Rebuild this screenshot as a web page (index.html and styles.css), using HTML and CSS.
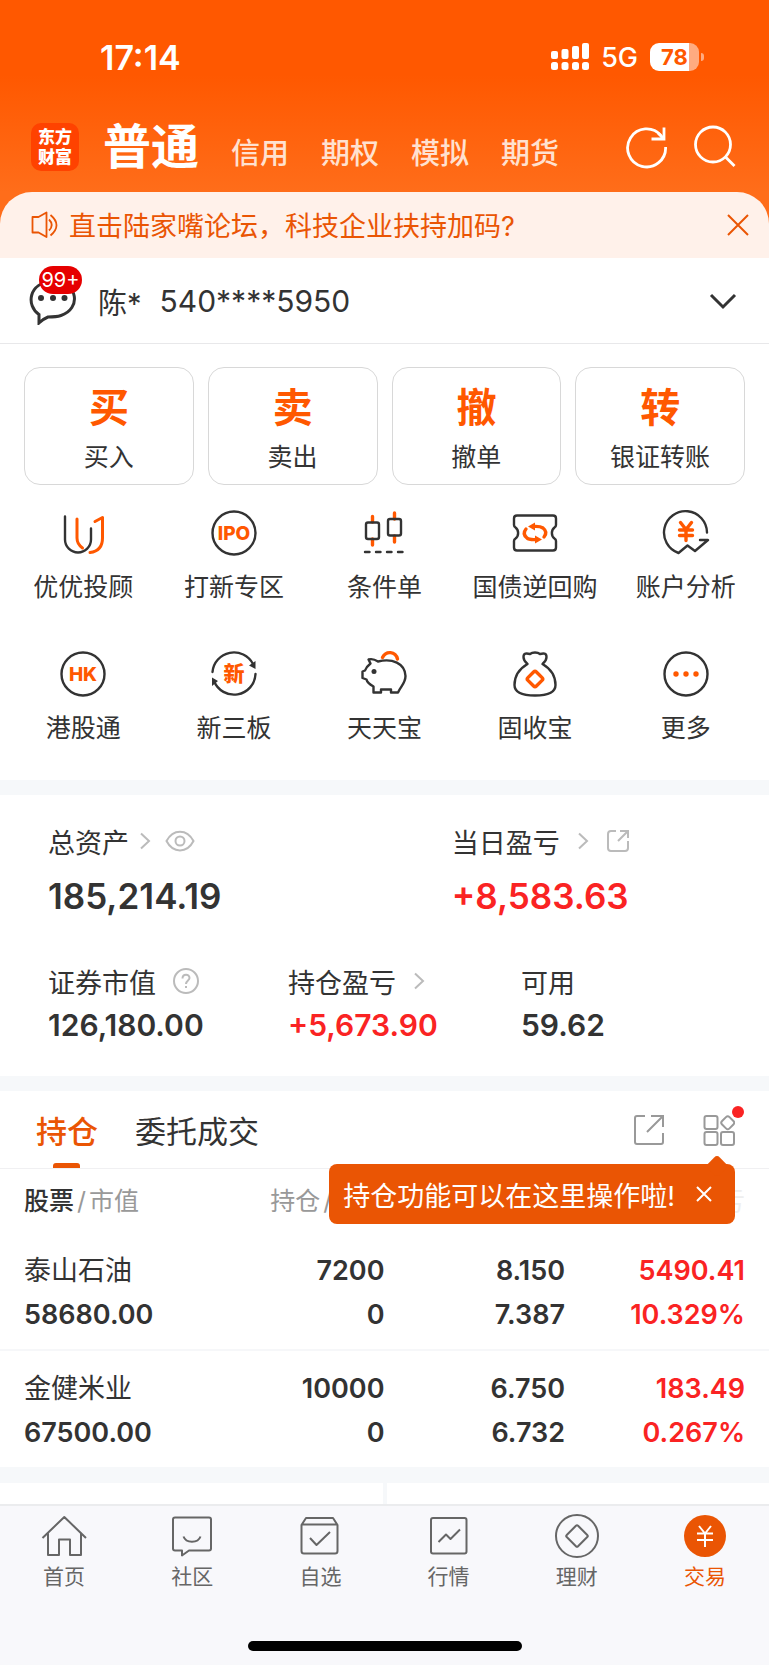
FILE: index.html
```html
<!DOCTYPE html>
<html lang="zh-CN">
<head>
<meta charset="utf-8">
<meta name="viewport" content="width=device-width, initial-scale=1">
<title>交易</title>
<link rel="stylesheet" href="styles.css">
</head>
<body>
<div class="top">
  <div class="status">
    <time class="clock">17:14</time>
    <div class="status-right">
      <svg width="38" height="28" viewBox="0 0 38 28" fill="#fff" aria-hidden="true">
        <rect x="0" y="8" width="7" height="8" rx="2"/><rect x="10.500" y="6" width="7" height="10" rx="2"/><rect x="21" y="3" width="7" height="13" rx="2"/><rect x="31" y="0" width="7" height="16" rx="2"/>
        <rect x="0" y="19" width="7" height="8" rx="2.500"/><rect x="10.500" y="19" width="7" height="8" rx="2.500"/><rect x="21" y="19" width="7" height="8" rx="2.500"/><rect x="31" y="19" width="7" height="8" rx="2.500"/>
      </svg>
      <span class="network">5G</span>
      <span class="battery">78</span>
    </div>
  </div>
  <header class="header">
    <div class="logo"><span>东方</span><span>财富</span></div>
    <nav class="modes">
      <a class="mode mode-on" href="#">普通</a>
      <a class="mode" href="#">信用</a>
      <a class="mode" href="#">期权</a>
      <a class="mode" href="#">模拟</a>
      <a class="mode" href="#">期货</a>
    </nav>
    <div class="header-tools">
      <button aria-label="刷新"><svg width="44" height="44" viewBox="0 0 44 44" fill="none" stroke="#fff" stroke-width="2.800"><path d="M40.600 22A19 19 0 1 1 36 10.500"/><path d="M39 2.500V14H26.500M38 13L33 8"/></svg></button>
      <button aria-label="搜索"><svg width="44" height="44" viewBox="0 0 44 44" fill="none" stroke="#fff" stroke-width="2.800"><circle cx="20" cy="19.500" r="17.500"/><path d="M32 31.500L41.500 41"/></svg></button>
    </div>
  </header>
  <div class="notice">
    <svg width="28" height="28" viewBox="0 0 28 28" fill="none" stroke="#ea5504" stroke-width="1.800" stroke-linejoin="round" aria-hidden="true"><path d="M2.500 6H8.500L16.500 1.500V26L8.500 21.500H2.500Z"/><path d="M19 8.500Q24.500 14 19 19.500"/><path d="M20.500 4Q32.500 14 20.500 24.500"/></svg>
    <a class="notice-text" href="#">直击陆家嘴论坛，科技企业扶持加码?</a>
    <button aria-label="关闭公告"><svg width="24" height="24" viewBox="0 0 24 24" stroke="#ea5504" stroke-width="2"><path d="M2 2L22 22M22 2L2 22"/></svg></button>
  </div>
</div>

<main>
  <section class="account">
    <button class="messages" aria-label="消息">
      <svg width="48" height="48" viewBox="0 0 48 48" fill="none" aria-hidden="true"><path d="M10 46V37.500C-3 29 -1 5 24 4.500C50 5 52 32 32 38.500C28 39.800 23 40 19 40Q15 41.500 10 46Z" stroke="#333" stroke-width="3"/><g fill="#333"><circle cx="12" cy="21" r="3"/><circle cx="24" cy="21" r="3"/><circle cx="35.500" cy="21" r="3"/></g></svg>
      <span class="badge">99+</span>
    </button>
    <span class="holder">陈*</span>
    <span class="number">540****5950</span>
    <button aria-label="切换账户"><svg width="28" height="18" viewBox="0 0 28 18" fill="none" stroke="#333" stroke-width="3"><path d="M2 3L14 15L26 3"/></svg></button>
  </section>

  <section class="actions">
    <button class="action"><strong>买</strong><span>买入</span></button>
    <button class="action"><strong>卖</strong><span>卖出</span></button>
    <button class="action"><strong>撤</strong><span>撤单</span></button>
    <button class="action"><strong>转</strong><span>银证转账</span></button>
  </section>

  <section class="services">
    <a class="service" href="#"><svg class="ico" viewBox="0 0 48 48"><path d="M6 7.500V30.500A13 13 0 0 0 32 30.500V19.500"/><path class="hot" d="M18 10V29Q18 35 23.500 39M36 12.500L43.500 8.500V29Q43.500 42 31 43.500"/></svg><span>优优投顾</span></a>
    <a class="service" href="#"><svg class="ico" viewBox="0 0 48 48"><circle cx="24" cy="24" r="21.500"/><text class="ico-text" x="24" y="31">IPO</text></svg><span>打新专区</span></a>
    <a class="service" href="#"><svg class="ico" viewBox="0 0 48 48"><path class="wick" d="M12.500 7.500V13M12.500 30V36M34.500 4V10M34.500 27V33"/><rect x="6" y="13.500" width="13" height="16.500" rx="2"/><rect x="28" y="10" width="13" height="16.500" rx="2"/><path d="M5 43H9.500M16 43H20.500M27 43H31.500M38 43H42.500"/></svg><span>条件单</span></a>
    <a class="service" href="#"><svg class="ico" viewBox="0 0 48 48"><path d="M6 6.500H42Q45 6.500 45 9.500V16Q45 17.500 43.500 18.500C40 21 40 27 43.500 29.500Q45 30.500 45 32V38.500Q45 41.500 42 41.500H6Q3 41.500 3 38.500V32Q3 30.500 4.500 29.500C8 27 8 21 4.500 18.500Q3 17.500 3 16V9.500Q3 6.500 6 6.500Z"/><path class="wick" d="M15 20Q11 25 16 29Q18 31 26 30.500M33 28Q37 23 32 19Q29 17 22 17.500"/><path class="hot-fill" d="M24 13.500V21.500L17 17.500ZM24 26.500V34.500L31 30.500Z"/></svg><span>国债逆回购</span></a>
    <a class="service" href="#"><svg class="ico" viewBox="0 0 48 48"><path d="M45 23.500A21.500 21.500 0 1 0 16.500 44L25.500 36.500L33 42L46 31H38"/><path class="wick" d="M18.500 13.500L24 20.500L29.500 13.500M17.500 21H30.500M17.500 26.500H30.500M24 21V31.500"/></svg><span>账户分析</span></a>
    <a class="service" href="#"><svg class="ico" viewBox="0 0 48 48"><circle cx="24" cy="24" r="21.500"/><text class="ico-text" x="24" y="31">HK</text></svg><span>港股通</span></a>
    <a class="service" href="#"><svg class="ico" viewBox="0 0 48 48"><path d="M2.500 22A21.500 21.500 0 0 1 43 14M45.500 24A21.500 21.500 0 0 1 4 31"/><path class="dark-fill" d="M45.500 11V19L39 15.500ZM2 36V27.500L8 31Z"/><text class="ico-text ico-cjk" x="24" y="31">新</text></svg><span>新三板</span></a>
    <a class="service" href="#"><svg class="ico" viewBox="0 0 48 48"><path d="M8.500 9.500C12 8.500 15 9.500 18 11.500C32 8 45 13 45.500 26C45.500 33 41 36 38 42.500H31V39.500H21V42.500H13.500V36.500C9 34 7 32 6.500 29.500L2.500 28V21.500L5 20.500C6 17 8 15.500 10.500 13.500Z"/><circle class="dark-fill" cx="14" cy="21.500" r="2.500"/><path class="wick" d="M22.500 7.500C26 .5 35.500 1 37.500 9"/></svg><span>天天宝</span></a>
    <a class="service" href="#"><svg class="ico" viewBox="0 0 48 48"><path d="M16.500 14C8 19 3.500 26 3.500 35C3.500 43 12 45.500 24 45.500S44.500 43 44.500 35C44.500 26 40 19 31.500 14C34 12 35.500 10 35.500 7C35.500 3 32.500 3 29 4C26.500 2 21.500 2 19 4C15.500 3 12.500 3 12.500 7C12.500 10 14 12 16.500 14Z"/><rect class="wick" x="18" y="23" width="12" height="12" rx="2" transform="rotate(45 24 29)"/></svg><span>固收宝</span></a>
    <a class="service" href="#"><svg class="ico" viewBox="0 0 48 48"><circle cx="24" cy="24" r="21.500"/><g class="hot-fill"><circle cx="14" cy="24" r="2.700"/><circle cx="24" cy="24" r="2.700"/><circle cx="34" cy="24" r="2.700"/></g></svg><span>更多</span></a>
  </section>

  <section class="assets">
    <div class="asset-row asset-main">
      <div>
        <div class="label">总资产<svg width="12" height="18" viewBox="0 0 12 18" class="line-ico"><path d="M2 1.500L10 9L2 16.500"/></svg><svg width="30" height="22" viewBox="0 0 30 22" class="line-ico eye"><path d="M1.500 11C8 -1.500 22 -1.500 28.500 11C22 23.500 8 23.500 1.500 11Z"/><circle cx="15" cy="11" r="4.500"/></svg></div>
        <div class="value">185,214.19</div>
      </div>
      <div>
        <div class="label">当日盈亏<svg width="12" height="18" viewBox="0 0 12 18" class="line-ico wide"><path d="M2 1.500L10 9L2 16.500"/></svg><svg width="24" height="24" viewBox="0 0 24 24" class="line-ico wide"><path d="M10 2H5Q2 2 2 5V19Q2 22 5 22H19Q22 22 22 19V12M14 2H22V9M21 3L12 12"/></svg></div>
        <div class="value up">+8,583.63</div>
      </div>
    </div>
    <div class="asset-row asset-sub">
      <div>
        <div class="label">证券市值<svg width="26" height="26" viewBox="0 0 26 26" class="line-ico wide"><circle cx="13" cy="13" r="12"/><path d="M9.500 10.500C9.500 5.500 16.500 5.500 16.500 10C16.500 12.500 13 12.500 13 16M13 18V20"/></svg></div>
        <div class="value">126,180.00</div>
      </div>
      <div>
        <div class="label">持仓盈亏<svg width="12" height="18" viewBox="0 0 12 18" class="line-ico wide"><path d="M2 1.500L10 9L2 16.500"/></svg></div>
        <div class="value up">+5,673.90</div>
      </div>
      <div>
        <div class="label">可用</div>
        <div class="value">59.62</div>
      </div>
    </div>
  </section>

  <section class="positions">
    <div class="tabs">
      <button class="tab tab-on">持仓</button>
      <button class="tab">委托成交</button>
      <div class="tab-tools">
        <button aria-label="分享"><svg width="32" height="32" viewBox="0 0 32 32" fill="none" stroke="#999" stroke-width="2"><path d="M12 2H4Q2 2 2 4V28Q2 30 4 30H28Q30 30 30 28V19M18 2H30V13M29 3L14 18"/></svg></button>
        <button class="grid-tool" aria-label="持仓功能"><svg width="32" height="32" viewBox="0 0 32 32" fill="none" stroke="#999" stroke-width="2"><rect x="1.500" y="2" width="13" height="13" rx="2"/><rect x="1.500" y="18" width="13" height="13" rx="2"/><rect x="18" y="18" width="13" height="13" rx="2"/><rect x="19.500" y="3.500" width="10.500" height="10.500" rx="2.500" transform="rotate(45 24.750 8.750)"/></svg><i class="dot"></i>
        </button>
        <div class="tip" role="tooltip">
          <span>持仓功能可以在这里操作啦!</span>
          <button aria-label="关闭提示"><svg width="18" height="18" viewBox="0 0 18 18" stroke="#fff" stroke-width="2"><path d="M2 2L16 16M16 2L2 16"/></svg></button>
        </div>
      </div>
    </div>
    <table class="holdings">
      <thead>
        <tr><th><b>股票</b><i>/</i>市值</th><th>持仓<i>/</i></th><th></th><th>亏</th></tr>
      </thead>
      <tbody>
        <tr><td><span class="stock">泰山石油</span><span>58680.00</span></td><td><span>7200</span><span>0</span></td><td><span>8.150</span><span>7.387</span></td><td class="up"><span>5490.41</span><span>10.329%</span></td></tr>
        <tr><td><span class="stock">金健米业</span><span>67500.00</span></td><td><span>10000</span><span>0</span></td><td><span>6.750</span><span>6.732</span></td><td class="up"><span>183.49</span><span>0.267%</span></td></tr>
      </tbody>
    </table>
  </section>
  <div class="links"><div></div><div></div></div>
</main>

<footer class="bottom">
  <nav class="tabbar">
    <a href="#"><svg class="nav-ico" viewBox="0 0 48 48"><path d="M2.500 26L24.300 5L46 26M8 21.500V43H19V27.500H30V43H41V21.500"/></svg>首页</a>
    <a href="#"><svg class="nav-ico" viewBox="0 0 48 48"><path d="M7 5.500H41Q43 5.500 43 7.500V36.500Q43 38.500 41 38.500H21L14 43.500V38.500H7Q5 38.500 5 36.500V7.500Q5 5.500 7 5.500ZM15.500 24.500C18 31.500 30 31.500 32.500 24.500"/></svg>社区</a>
    <a href="#"><svg class="nav-ico" viewBox="0 0 48 48"><path d="M5.500 13V39Q5.500 41.500 8 41.500H39Q41.500 41.500 41.500 39V13L37 6H10ZM5.500 12.500H41.500M14 26L20.500 33L34 20"/></svg>自选</a>
    <a href="#"><svg class="nav-ico" viewBox="0 0 48 48"><rect x="6" y="6" width="35.500" height="35.500" rx="2"/><path d="M13.500 30L21 22.500L25.500 27L35 17.500"/></svg>行情</a>
    <a href="#"><svg class="nav-ico" viewBox="0 0 48 48"><circle cx="24" cy="24" r="21"/><rect x="16" y="16" width="16" height="16" rx="1.500" transform="rotate(45 24 24)"/></svg>理财</a>
    <a class="nav-on" href="#"><svg class="nav-ico" viewBox="0 0 48 48"><circle cx="24" cy="24" r="21"/><path d="M18 14L24 21.500L30 14M16 21.500H32M16 28H32M24 21.500V35"/></svg>交易</a>
  </nav>
  <div class="home-bar"></div>
</footer>
</body>
</html>
```
FILE: styles.css
```css
* { box-sizing: border-box; }
body {
  margin: 0;
  min-height: 100vh;
  display: flex;
  flex-direction: column;
  background: #f8f8fb;
  color: #333;
  font-family: Inter, "Noto Sans CJK SC", sans-serif;
  font-size: 27px;
}
button {
  padding: 0;
  border: 0;
  background: none;
  color: inherit;
  font: inherit;
  display: block;
}
a { color: inherit; text-decoration: none; }
svg { display: block; flex: none; }
i, b { font-style: normal; }

/* Status bar, header and notice */
.top { background: linear-gradient(#ff5800 75px, #ff6d1a 192px); }
.status {
  height: 102px;
  padding: 12px 64px 0 100px;
  display: flex;
  align-items: center;
  justify-content: space-between;
  color: #fff;
}
.clock { font-size: 34px; font-weight: 600; }
.status-right { display: flex; align-items: center; gap: 12px; }
.network { font-weight: 500; }
.battery {
  position: relative;
  width: 49px;
  height: 28px;
  margin-right: 6px;
  border-radius: 9px;
  background: linear-gradient(90deg, #fff 79%, #ffab80 79%);
  color: #ff5800;
  font-size: 22px;
  font-weight: 700;
  line-height: 28px;
  text-align: center;
}
.battery::after {
  content: "";
  position: absolute;
  left: 51px;
  top: 10px;
  width: 3px;
  height: 8px;
  border-radius: 0 4px 4px 0;
  background: #ffab80;
}
.header {
  height: 90px;
  padding: 0 32px 0 31px;
  display: flex;
  align-items: center;
}
.logo {
  width: 48px;
  height: 48px;
  border-radius: 10px;
  background: #ff4200;
  color: #fff;
  font-size: 17px;
  font-weight: 900;
  line-height: 20px;
  display: flex;
  flex-direction: column;
  align-items: center;
  justify-content: center;
}
.modes {
  flex: 1;
  margin-left: 24px;
  padding-top: 6px;
  display: flex;
  align-items: baseline;
  gap: 32px;
}
.mode { color: #ffe1d0; font-size: 29px; font-weight: 500; line-height: 64px; }
.mode-on { color: #fff; font-size: 48px; font-weight: 700; }
.header-tools { display: flex; gap: 24px; }
.notice {
  height: 66px;
  padding: 0 19px 0 30px;
  display: flex;
  align-items: center;
  border-radius: 32px 32px 0 0;
  background: #fff1ea;
  color: #ea5504;
}
.notice-text { flex: 1; margin-left: 11px; padding-bottom: 2px; }

/* Account */
main { background: #fff; }
.account {
  height: 86px;
  padding: 0 32px 0 29px;
  border-bottom: 1px solid #e8e8ea;
  display: flex;
  align-items: center;
}
.messages { position: relative; }
.badge {
  position: absolute;
  left: 10px;
  top: -11px;
  width: 43px;
  height: 28px;
  border-radius: 14px;
  background: #e60000;
  color: #fff;
  font-size: 20px;
  line-height: 28px;
  text-align: center;
}
.holder { margin-left: 21px; font-size: 29px; }
.number { flex: 1; margin-left: 18px; font-size: 30px; }

/* Main actions */
.actions {
  padding: 23px 24px 0;
  display: grid;
  grid-template-columns: repeat(4, 1fr);
  gap: 14px;
}
.action {
  height: 118px;
  border: 1px solid #d8d8d8;
  border-radius: 16px;
  display: flex;
  flex-direction: column;
  align-items: center;
  font-size: 25px;
  line-height: 36px;
}
.action strong {
  margin: 16px 0 7px;
  color: #ff5800;
  font-size: 40px;
  font-weight: 700;
  line-height: 48px;
}
.services {
  padding: 24px 8px 32px;
  display: grid;
  grid-template-columns: repeat(5, 1fr);
}
.service {
  height: 141px;
  display: flex;
  flex-direction: column;
  align-items: center;
  gap: 12px;
  font-size: 25px;
  line-height: 36px;
  white-space: nowrap;
}
.service:nth-child(n + 6) { height: 98px; }
.ico {
  width: 48px;
  height: 48px;
  fill: none;
  stroke: #333;
  stroke-width: 2.4;
  stroke-linecap: round;
  stroke-linejoin: round;
}
.hot { stroke: #ff5800; stroke-width: 3; }
.wick { stroke: #ff5800; stroke-width: 3.4; }
.hot-fill { fill: #ff5800; stroke: none; }
.dark-fill { fill: #333; stroke: none; }
.ico-text {
  fill: #ff5800;
  stroke: none;
  font-size: 19px;
  font-weight: 800;
  text-anchor: middle;
}
.ico-cjk { font-size: 21px; }

/* Assets */
.assets {
  padding: 26px 48px 15px;
  border-top: 15px solid #f6f8fa;
  border-bottom: 15px solid #f6f8fa;
}
.asset-row { display: grid; }
.asset-main { grid-template-columns: 3fr 2fr; height: 140px; }
.asset-sub { grid-template-columns: 240fr 233fr 200fr; height: 100px; }
.label { display: flex; align-items: center; height: 40px; }
.line-ico { fill: none; stroke: #bbb; stroke-width: 2; margin-left: 10px; }
.eye { margin-left: 14px; }
.wide { margin-left: 17px; }
.value { font-size: 30px; font-weight: 600; line-height: 48px; }
.asset-main .value { font-size: 35px; line-height: 70px; }
.up, .holdings .up { color: #fa2323; }

/* Positions */
.tabs {
  height: 78px;
  padding: 0 34px 0 36px;
  border-bottom: 1px solid #f0f0f2;
  display: flex;
  gap: 37px;
}
.tab { position: relative; font-size: 31px; }
.tab-on { color: #ea5504; font-weight: 500; }
.tab-on::after {
  content: "";
  position: absolute;
  left: 17px;
  bottom: 0;
  width: 27px;
  height: 5px;
  border-radius: 3px 3px 0 0;
  background: #ea5504;
}
.tab-tools {
  position: relative;
  margin-left: auto;
  display: flex;
  align-items: center;
  gap: 38px;
}
.grid-tool { position: relative; }
.dot {
  position: absolute;
  right: -9px;
  top: -8px;
  width: 12px;
  height: 12px;
  border-radius: 6px;
  background: #fa2323;
}
.tip {
  position: absolute;
  right: 0;
  top: 73px;
  height: 60px;
  padding: 0 22px 0 14px;
  border-radius: 8px;
  background: #ea5504;
  color: #fff;
  white-space: nowrap;
  display: flex;
  align-items: center;
  gap: 20px;
}
.tip::before {
  content: "";
  position: absolute;
  right: 10px;
  top: -6px;
  width: 16px;
  height: 16px;
  border-radius: 4px;
  background: #ea5504;
  transform: rotate(45deg);
}
.holdings {
  width: 100%;
  border-collapse: collapse;
  table-layout: fixed;
  text-align: right;
  font-weight: 600;
}
.holdings th {
  height: 64px;
  padding: 0 0 4px;
  color: #999;
  font-size: 25px;
  font-weight: 400;
}
.holdings th b { color: #333; font-weight: 500; }
.holdings th i { margin: 0 3px; }
.holdings td { padding: 16px 0 12px; }
.holdings td span { display: block; line-height: 44px; }
.holdings .stock { font-weight: 400; }
.holdings th:first-child, .holdings td:first-child { padding-left: 24px; text-align: left; }
.holdings th:last-child, .holdings td:last-child { padding-right: 24px; }
.holdings th:nth-child(-n + 2) { width: 25%; }
.holdings th:nth-child(2) { padding-left: 78px; text-align: left; }
.holdings th:last-child { width: 204px; color: #eee; }
.holdings tbody tr + tr { border-top: 2px solid #f6f7f9; }
.links {
  padding-top: 16px;
  background: #f6f8fa;
  display: grid;
  grid-template-columns: 1fr 1fr;
  gap: 4px;
}
.links div { height: 21px; background: #fff; }

/* Bottom navigation */
.bottom { flex: 1; border-top: 2px solid #ebecee; }
.tabbar {
  padding-top: 6px;
  display: grid;
  grid-template-columns: repeat(6, 1fr);
}
.tabbar a {
  display: flex;
  flex-direction: column;
  align-items: center;
  color: #666;
  font-size: 21px;
  line-height: 34px;
}
.nav-ico { width: 48px; height: 48px; fill: none; stroke: #666; stroke-width: 2; stroke-linejoin: round; }
.tabbar .nav-on { color: #ea5504; }
.nav-on circle { fill: #ea5504; stroke: none; }
.nav-on path { stroke: #fff; }
.home-bar {
  width: 274px;
  height: 10px;
  margin: 47px auto 14px;
  border-radius: 5px;
  background: #000;
}
```
